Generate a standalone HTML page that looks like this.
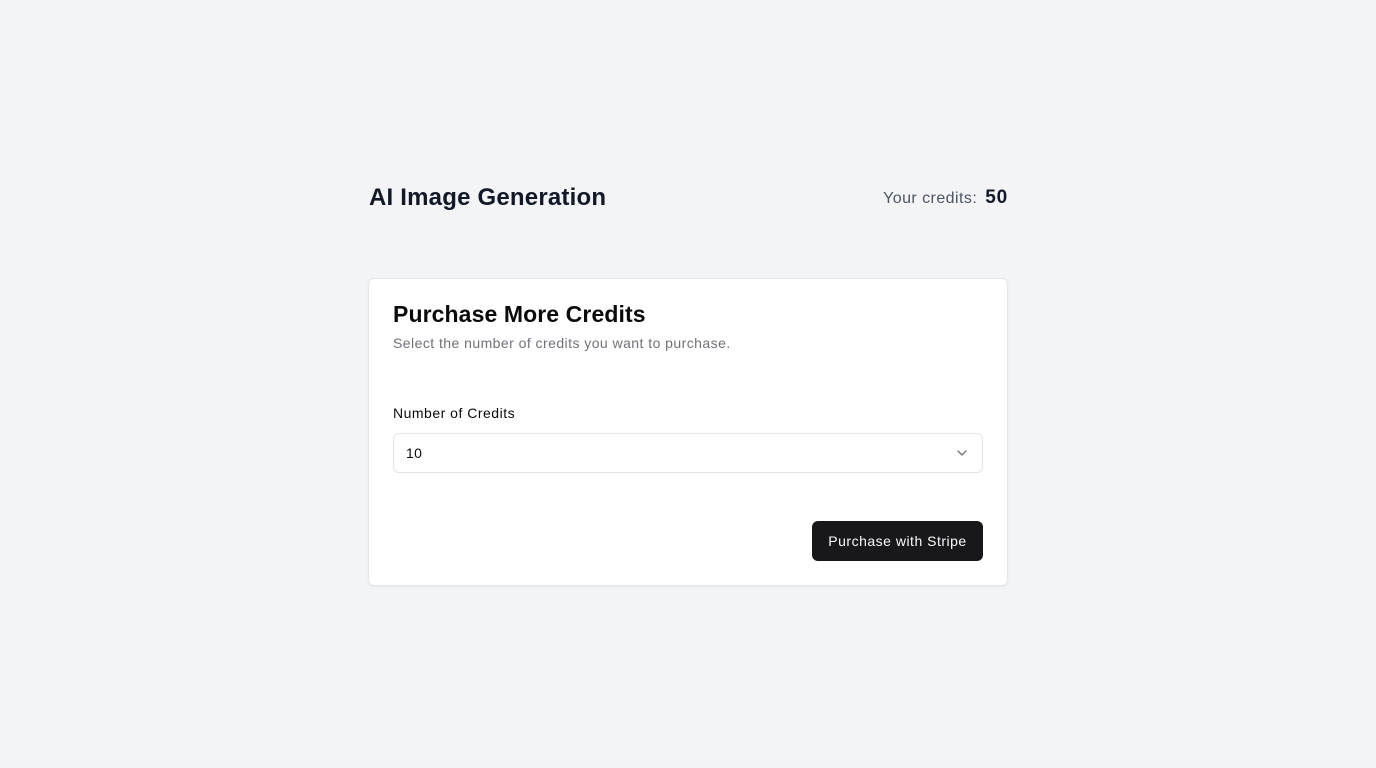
<!DOCTYPE html>
<html><head><style>
*{box-sizing:border-box;margin:0;padding:0}
body{width:1376px;height:768px;background:#f3f4f6;font-family:"Liberation Sans",sans-serif;position:relative}
.h1{position:absolute;left:369px;top:184px;font-size:24px;font-weight:bold;color:#111827;letter-spacing:0.2px}
.cr{position:absolute;right:368px;top:187px;font-size:16px;color:#4b5563;letter-spacing:0.45px}
.cr b{font-size:19px;color:#111827;margin-left:8px;letter-spacing:0.8px}
.card{position:absolute;left:368px;top:278px;width:640px;height:308px;background:#fff;border:1px solid #e5e7eb;border-radius:6px;box-shadow:0 1px 2px rgba(0,0,0,.05)}
.t{position:absolute;left:24px;top:22px;font-size:23px;font-weight:bold;color:#0a0a0a;letter-spacing:0.1px}
.s{position:absolute;left:24px;top:56px;font-size:14px;color:#71717a;letter-spacing:0.45px}
.l{position:absolute;left:24px;top:126px;font-size:14px;color:#0a0a0a;letter-spacing:0.5px}
.sel{position:absolute;left:24px;top:154px;width:590px;height:40px;border:1px solid #e4e4e7;border-radius:6px;font-size:14px;padding:11px 12px;color:#0a0a0a;letter-spacing:0.3px}
.sel svg{position:absolute;right:12px;top:11px}
.btn{position:absolute;right:24px;top:242px;width:171px;height:40px;background:#18181b;color:#fafafa;border-radius:6px;font-size:14px;text-align:center;line-height:40px;letter-spacing:0.5px}
</style></head><body>
<div class="h1">AI Image Generation</div>
<div class="cr">Your credits:<b>50</b></div>
<div class="card">
<div class="t">Purchase More Credits</div>
<div class="s">Select the number of credits you want to purchase.</div>
<div class="l">Number of Credits</div>
<div class="sel">10<svg width="16" height="16" viewBox="0 0 16 16"><path d="M4 6l4 4 4-4" fill="none" stroke="#71717a" stroke-width="1.3" stroke-linecap="round" stroke-linejoin="round"/></svg></div>
<div class="btn">Purchase with Stripe</div>
</div>
</body></html>
